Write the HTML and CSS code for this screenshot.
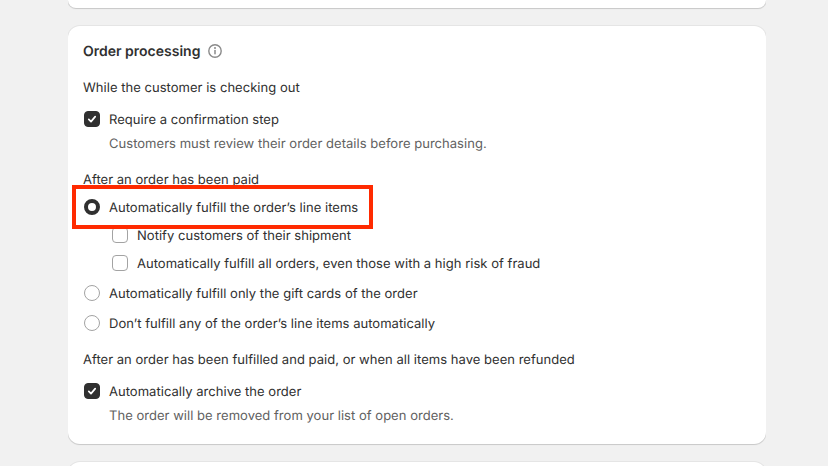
FILE: index.html
```html
<!DOCTYPE html>
<html lang="en">
<head>
<meta charset="utf-8">
<title>Order processing</title>
<link rel="stylesheet" href="styles.css">
</head>
<body>
<div class="page">
  <div class="card stub-top"></div>
  <section class="card main">
    <div class="title-row">
      <h2 class="title">Order processing</h2>
      <svg class="info" viewBox="0 0 16 16" width="16" height="16" fill="none"><circle cx="8" cy="8" r="6.2" stroke="#8a8a8a" stroke-width="1.4"/><path d="M8 7.4v3.4" stroke="#8a8a8a" stroke-width="1.5" stroke-linecap="round"/><circle cx="8" cy="5.1" r="1" fill="#8a8a8a"/></svg>
    </div>
    <div class="group">
      <p class="heading">While the customer is checking out</p>
      <div class="option first">
        <span class="box checked"><svg viewBox="0 0 16 16" width="16" height="16" fill="none"><path d="M4.8 8.4l2.2 2.2 4.2-5" stroke="#fff" stroke-width="1.7" stroke-linecap="round" stroke-linejoin="round"/></svg></span>
        <span>Require a confirmation step</span>
      </div>
      <p class="help">Customers must review their order details before purchasing.</p>
    </div>
    <div class="group">
      <p class="heading">After an order has been paid</p>
      <div class="radios">
        <div class="radio-item">
          <div class="option"><span class="radio on"></span><span>Automatically fulfill the order’s line items</span></div>
          <div class="option sub"><span class="box"></span><span>Notify customers of their shipment</span></div>
          <div class="option sub"><span class="box"></span><span>Automatically fulfill all orders, even those with a high risk of fraud</span></div>
        </div>
        <div class="option"><span class="radio"></span><span>Automatically fulfill only the gift cards of the order</span></div>
        <div class="option"><span class="radio"></span><span>Don’t fulfill any of the order’s line items automatically</span></div>
      </div>
    </div>
    <div class="group">
      <p class="heading">After an order has been fulfilled and paid, or when all items have been refunded</p>
      <div class="option first">
        <span class="box checked"><svg viewBox="0 0 16 16" width="16" height="16" fill="none"><path d="M4.8 8.4l2.2 2.2 4.2-5" stroke="#fff" stroke-width="1.7" stroke-linecap="round" stroke-linejoin="round"/></svg></span>
        <span>Automatically archive the order</span>
      </div>
      <p class="help">The order will be removed from your list of open orders.</p>
    </div>
    <div class="highlight"></div>
  </section>
  <div class="card stub-bottom"></div>
</div>
</body>
</html>
```
FILE: styles.css
```css
* { box-sizing: border-box; }
html, body { margin: 0; height: 100%; }
body {
  background: #f1f1f1;
  font-family: Inter, "Liberation Sans", sans-serif;
  font-size: 13px;
  line-height: 20px;
  color: #303030;
  overflow: hidden;
  text-rendering: geometricPrecision;
  letter-spacing: .03px;
}
.page {
  width: 698px;
  margin-left: 68px;
  height: 466px;
  display: flex;
  flex-direction: column;
  gap: 18px;
  overflow: hidden;
}
.card {
  background: #fff;
  box-shadow: 0 1px 1px rgba(26, 26, 26, .14), 0 0 0 1px rgba(26, 26, 26, .05);
  flex: none;
}
.stub-top { height: 8px; border-radius: 0 0 12px 12px; }
.stub-bottom { height: 20px; border-radius: 12px 12px 0 0; }
.main {
  position: relative;
  height: 418px;
  border-radius: 12px;
  padding: 16px 15px 0;
}
.title-row { display: flex; align-items: center; gap: 7px; height: 20px; }
.title { margin: 0; font-size: 14px; font-weight: 600; line-height: 20px; letter-spacing: 0; }
.info { display: block; margin-bottom: 2px; }
.group { margin-top: 16px; }
.heading { margin: 0; }
.help { margin: 4px 0 0 26px; color: #616161; }
.option { display: flex; align-items: flex-start; gap: 9px; height: 20px; }
.option.first { margin-top: 12px; }
.sub { margin-left: 28px; }
.radios { margin-top: 8px; display: flex; flex-direction: column; gap: 10px; }
.radio-item { display: flex; flex-direction: column; gap: 8px; }
.box {
  width: 16px; height: 16px; flex: none;
  margin: 1px 0 0 1px;
  border: 1px solid #a3a3a3;
  border-radius: 4px;
  background: #fff;
  position: relative;
}
.box.checked { background: #303030; border-color: #303030; }
.box svg { display: block; margin: -1px; }
.radio {
  width: 16px; height: 16px; flex: none;
  margin: 1px 0 0 1px;
  border: 1px solid #a3a3a3;
  border-radius: 50%;
  background: #fff;
}
.radio.on { border: 4.5px solid #303030; }
.highlight {
  position: absolute;
  left: 4px; top: 159px;
  width: 301px; height: 44px;
  border: 4px solid #ff2a00;
}
```
